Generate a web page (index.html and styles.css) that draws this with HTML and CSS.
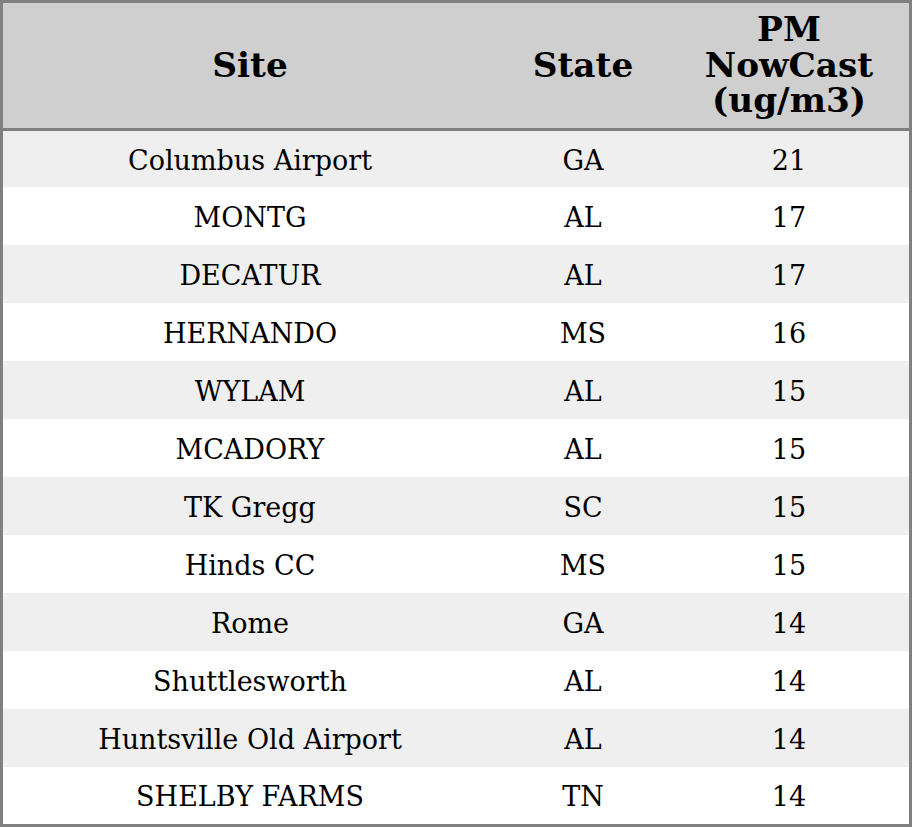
FILE: index.html
```html
<!DOCTYPE html>
<html>
<head>
<meta charset="utf-8">
<link rel="stylesheet" href="styles.css">
</head>
<body>
<table class="aq-table">
  <colgroup>
    <col class="col-site">
    <col class="col-state">
    <col class="col-pm">
  </colgroup>
  <thead>
    <tr>
      <th>Site</th>
      <th>State</th>
      <th>PM<br>NowCast<br>(ug/m3)</th>
    </tr>
  </thead>
  <tbody>
    <tr class="odd first"><td>Columbus Airport</td><td>GA</td><td>21</td></tr>
    <tr class="even"><td>MONTG</td><td>AL</td><td>17</td></tr>
    <tr class="odd"><td>DECATUR</td><td>AL</td><td>17</td></tr>
    <tr class="even"><td>HERNANDO</td><td>MS</td><td>16</td></tr>
    <tr class="odd"><td>WYLAM</td><td>AL</td><td>15</td></tr>
    <tr class="even"><td>MCADORY</td><td>AL</td><td>15</td></tr>
    <tr class="odd"><td>TK Gregg</td><td>SC</td><td>15</td></tr>
    <tr class="even"><td>Hinds CC</td><td>MS</td><td>15</td></tr>
    <tr class="odd"><td>Rome</td><td>GA</td><td>14</td></tr>
    <tr class="even"><td>Shuttlesworth</td><td>AL</td><td>14</td></tr>
    <tr class="odd"><td>Huntsville Old Airport</td><td>AL</td><td>14</td></tr>
    <tr class="even last"><td>SHELBY FARMS</td><td>TN</td><td>14</td></tr>
  </tbody>
</table>
</body>
</html>
```

FILE: styles.css
```css
html, body {
  margin: 0;
  padding: 0;
  background: #ffffff;
}

.aq-table {
  width: 912px;
  border: 3px solid #808080;
  border-collapse: separate;
  border-spacing: 0;
  table-layout: fixed;
  font-family: "DejaVu Serif", serif;
  color: #000;
}

.col-site { width: 494px; }
.col-state { width: 172px; }
.col-pm { width: 240px; }

.aq-table th {
  background: #cfcfcf;
  height: 125px;
  padding: 0;
  font-size: 34.3px;
  line-height: 35.5px;
  font-weight: bold;
  text-align: center;
  vertical-align: middle;
  border-bottom: 3px solid #808080;
}

.aq-table td {
  height: 56px;
  padding: 2px 0 0 0;
  font-size: 27px;
  text-align: center;
  vertical-align: middle;
}

.aq-table tr.first td { height: 54px; }
.aq-table tr.last td { height: 55px; }

.aq-table tr.odd td { background: #efefef; }
.aq-table tr.even td { background: #ffffff; }
```
